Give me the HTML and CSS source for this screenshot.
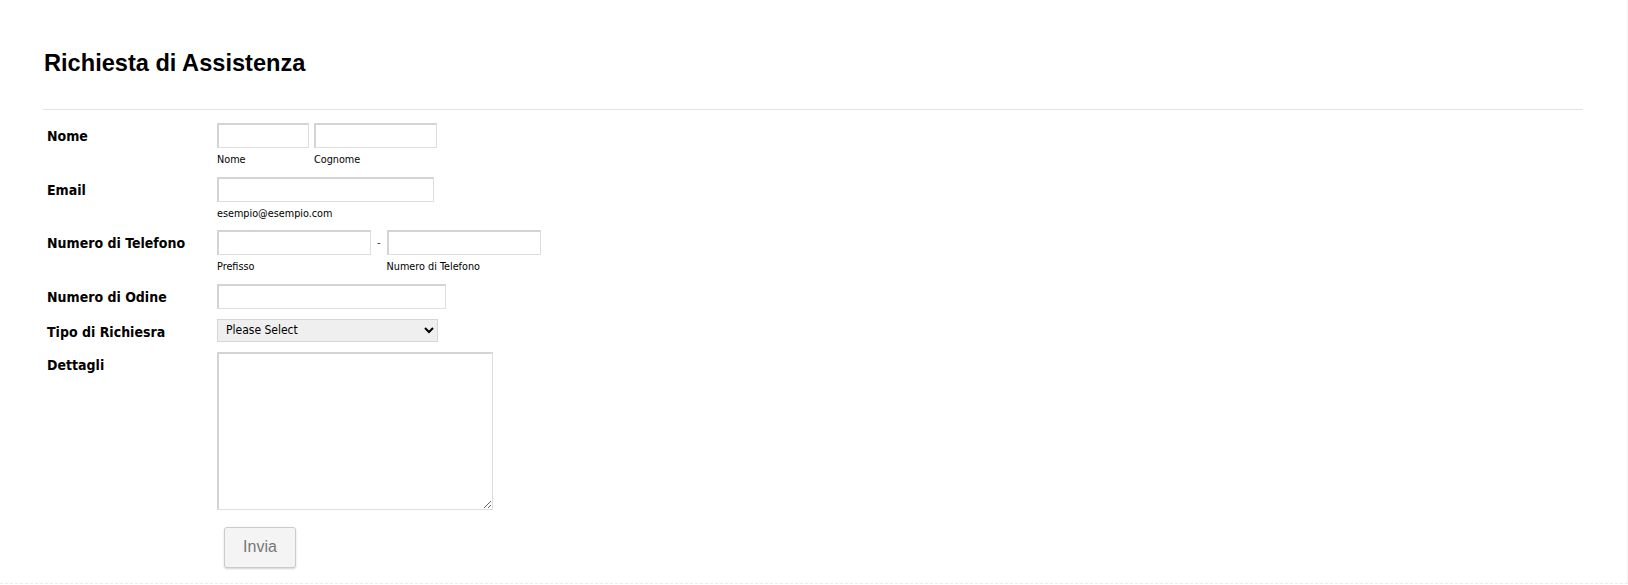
FILE: index.html
```html
<html>
<head>
<title>Richiesta di Assistenza</title>
<link rel="stylesheet" href="styles.css">
</head>
<body>
<div class="page">
<form class="form">
  <h1 class="form-title">Richiesta di Assistenza</h1>
  <hr class="divider">

  <div class="row">
    <label class="row-label">Nome</label>
    <div class="fields">
      <span class="field">
        <input type="text" class="input w-first">
        <span class="sub">Nome</span>
      </span>
      <span class="field">
        <input type="text" class="input w-last">
        <span class="sub">Cognome</span>
      </span>
    </div>
  </div>

  <div class="row">
    <label class="row-label">Email</label>
    <div class="fields">
      <span class="field">
        <input type="text" class="input w-email">
        <span class="sub">esempio@esempio.com</span>
      </span>
    </div>
  </div>

  <div class="row">
    <label class="row-label">Numero di Telefono</label>
    <div class="fields">
      <span class="field">
        <input type="text" class="input w-phone">
        <span class="sub">Prefisso</span>
      </span>
      <span class="dash">-</span>
      <span class="field">
        <input type="text" class="input w-phone">
        <span class="sub">Numero di Telefono</span>
      </span>
    </div>
  </div>

  <div class="row">
    <label class="row-label">Numero di Odine</label>
    <div class="fields">
      <input type="text" class="input w-order">
    </div>
  </div>

  <div class="row">
    <label class="row-label">Tipo di Richiesra</label>
    <div class="fields">
      <select class="select">
        <option>Please Select</option>
      </select>
    </div>
  </div>

  <div class="row">
    <label class="row-label">Dettagli</label>
    <div class="fields">
      <textarea class="textarea"></textarea>
    </div>
  </div>

  <div class="row row-submit">
    <button type="button" class="button">Invia</button>
  </div>
</form>
</div>
</body>
</html>
```

FILE: styles.css
```css
html, body {
  margin: 0;
  padding: 0;
  background: #fff;
}
body {
  font-family: "DejaVu Sans Condensed", "DejaVu Sans", sans-serif;
  color: #000;
}
.page {
  border-right: 1px solid #f2f2f2;
  border-bottom: 1px dashed #ececec;
  padding-bottom: 15px;
}
.form {
  margin: 0 44px 0 43px;
}
.form-title {
  font-family: "Liberation Sans", Arial, sans-serif;
  font-size: 23.6px;
  line-height: 28px;
  font-weight: bold;
  margin: 0;
  padding-top: 49px;
  padding-left: 1px;
}
.divider {
  border: 0;
  border-top: 1px solid #e4e4e4;
  margin: 32px 0 13px 0;
}
.row {
  display: flex;
  align-items: flex-start;
  padding: 0 4px;
  margin-bottom: 10px;
}
.row-label {
  width: 170px;
  flex: none;
  font-size: 14px;
  font-weight: bold;
  line-height: 17px;
  padding-top: 5px;
}
.fields {
  display: flex;
  align-items: flex-start;
  gap: 5px;
}
.field {
  display: flex;
  flex-direction: column;
}
.sub {
  font-size: 10.75px;
  line-height: 13.5px;
  margin-top: 5px;
}
.dash {
  font-size: 11px;
  line-height: 25px;
  color: #333;
  padding: 0 1px;
}
.input {
  height: 25px;
  box-sizing: border-box;
  border-style: solid;
  border-width: 2px 1px 1px 2px;
  border-color: #d4d4d4 #dedede #dedede #d4d4d4;
  background: #fff;
  padding: 2px 4px;
  margin: 0;
  font-size: 12px;
  outline: none;
}
.w-first { width: 92px; }
.w-last { width: 123px; }
.w-email { width: 217px; }
.w-phone { width: 154px; }
.w-order { width: 229px; }
.select {
  width: 221px;
  height: 23px;
  box-sizing: border-box;
  margin: 0;
  border: 1px solid #d6d6d6;
  border-radius: 0;
  background-color: #efefef;
  font-family: "DejaVu Sans Condensed", "DejaVu Sans", sans-serif;
  font-size: 12px;
  color: #000;
  padding: 0 4px;
}
.textarea {
  width: 276px;
  height: 158px;
  box-sizing: border-box;
  margin: 0;
  border-style: solid;
  border-width: 2px 1px 1px 2px;
  border-color: #d4d4d4 #dedede #dedede #d4d4d4;
  outline: none;
  resize: both;
}
.row-submit {
  padding-left: 181px;
  padding-top: 7px;
  margin-bottom: 0;
}
.button {
  font-family: "Liberation Sans", Arial, sans-serif;
  font-size: 16px;
  color: #777;
  background: #f4f4f4;
  border: 1px solid #cbcbcb;
  border-radius: 3px;
  box-shadow: 0 1px 2px rgba(0,0,0,0.18);
  width: 72px;
  height: 41px;
  padding: 0;
}
```
